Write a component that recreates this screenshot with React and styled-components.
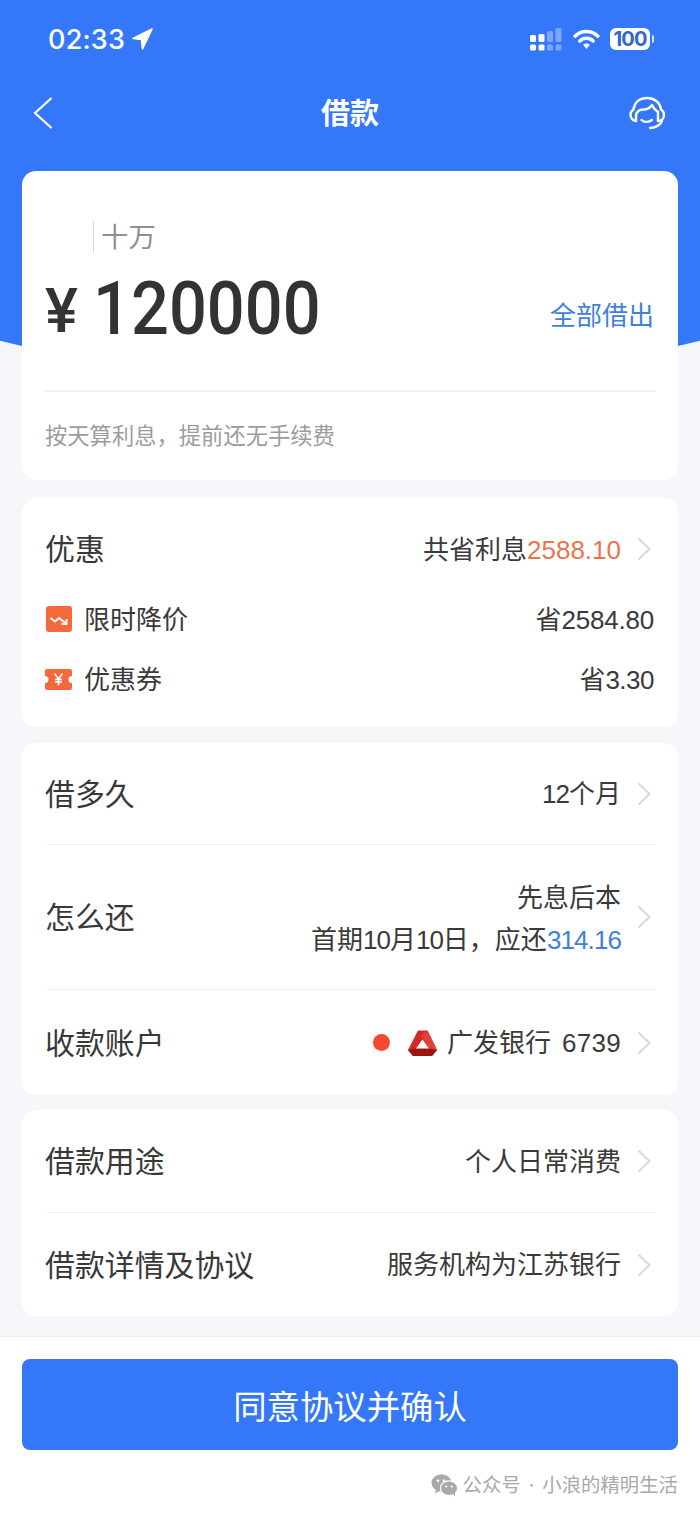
import React from "react";
import styled, { createGlobalStyle } from "styled-components";

const Global = createGlobalStyle`
  html, body { margin: 0; padding: 0; background: #f5f6fa; }
  body { font-family: "Noto Sans CJK SC", "Noto Sans", sans-serif; color: #333; }
  * { box-sizing: border-box; }
`;

const Page = styled.div`
  position: relative;
  width: 700px;
  height: 1514px;
  overflow: hidden;
  background: linear-gradient(#f3f3fb, #f6f7fa 300px);
  display: flex;
  flex-direction: column;
`;

const Backdrop = styled.div`
  position: absolute;
  left: -350px;
  right: -350px;
  top: -700px;
  height: 1081px;
  background: #3478f9;
  border-radius: 0 0 700px 700px / 0 0 300px 300px;
`;

const StatusBar = styled.div`
  position: relative;
  height: 78px;
  padding: 0 50px 0 48px;
  display: flex;
  align-items: center;
  justify-content: space-between;
  color: #fff;
`;

const Time = styled.div`
  display: flex;
  align-items: center;
  gap: 7px;
  font: 500 27px "Inter", sans-serif;
  letter-spacing: 0.2px;
`;

const StatusIcons = styled.div`
  display: flex;
  align-items: center;
  gap: 10px;
`;

const Signal = styled.svg`
  margin-right: 1px;
  flex: none;
`;

const Battery = styled.div`
  position: relative;
  width: 40px;
  height: 22px;
  border-radius: 6px;
  background: #fff;
  color: #2f68cf;
  font: 700 20px/22px "Inter", sans-serif;
  text-align: center;
  letter-spacing: -0.8px;
  &::after {
    content: "";
    position: absolute;
    right: -4px;
    top: 7px;
    width: 2px;
    height: 8px;
    border-radius: 0 2px 2px 0;
    background: rgba(255, 255, 255, 0.8);
  }
`;

const NavBar = styled.div`
  position: relative;
  height: 70px;
  padding: 0 35px 0 33px;
  display: flex;
  align-items: center;
  justify-content: space-between;
  margin-bottom: 23px;
`;

const NavTitle = styled.div`
  position: absolute;
  left: 0;
  right: 0;
  top: 0;
  text-align: center;
  color: #fff;
  font-size: 29px;
  font-weight: 700;
  line-height: 66px;
`;

const NavIcon = styled.svg`
  position: relative;
  flex: none;
`;

const Content = styled.div`
  position: relative;
  padding: 0 22px;
  display: flex;
  flex-direction: column;
`;

const Card = styled.section`
  background: #fff;
  border-radius: 14px;
  margin-bottom: ${(p) => p.$gap || 16}px;
  padding-bottom: ${(p) => p.$pb || 0}px;
`;

const AmountCard = styled(Card)`
  height: 309px;
  padding: 48px 22px 0 23px;
`;

const Unit = styled.div`
  height: 32px;
  margin-left: 48px;
  margin-top: 2px;
  padding-left: 7px;
  border-left: 1px solid #dcdcdc;
  color: #8f8f8f;
  font-size: 27.4px;
  line-height: 28px;
`;

const AmountRow = styled.div`
  height: 106px;
  margin-top: 2px;
  display: flex;
  align-items: center;
`;

const Yen = styled.span`
  font: 500 62px/1 "Roboto", sans-serif;
  color: #333;
  width: 48px;
  flex: none;
  margin-top: 6px;
`;

const Amount = styled.span`
  display: inline-block;
  font: 500 75px/1 "Roboto", sans-serif;
  color: #333;
  transform: scaleX(0.89);
  transform-origin: left center;
`;

const AllLink = styled.span`
  margin-left: auto;
  margin-right: 2px;
  color: #3f80dc;
  font-size: 26px;
  margin-top: 10px;
`;

const Rule = styled.div`
  height: 2px;
  background: #f1f1f3;
  margin-top: 29px;
`;

const Hint = styled.div`
  margin-top: 25px;
  color: #9c9c9c;
  font-size: 22.3px;
  line-height: 34px;
`;

const Row = styled.div`
  height: ${(p) => p.$h}px;
  padding-top: ${(p) => p.$pt || 0}px;
  margin: 0 22px 0 23px;
  display: flex;
  align-items: center;
  justify-content: space-between;
  border-bottom: ${(p) => (p.$line ? "1px solid #f3f3f5" : "0")};
`;

const Label = styled.div`
  font-size: 29.9px;
  color: #383838;
  white-space: nowrap;
  padding-bottom: 4px;
`;

const Value = styled.div`
  display: flex;
  align-items: center;
  font-size: 26px;
  color: #3a3a3a;
  white-space: nowrap;
  margin-right: 5px;
  padding-bottom: 4px;
`;

const Stack = styled.div`
  text-align: right;
  font-size: 26px;
  line-height: 42px;
  color: #3a3a3a;
  margin-top: 6px;
`;

const Num = styled.span`
  font-family: "Liberation Sans", sans-serif;
  font-size: 26px;
  letter-spacing: ${(p) => p.$ls || 0}px;
  margin-left: ${(p) => p.$ml || 0}px;
  color: ${(p) => p.$c || "inherit"};
`;

const ChevronBox = styled.svg`
  width: 14px;
  height: 26px;
  margin: 4px 0 0 16px;
  flex: none;
`;

const SubRow = styled.div`
  height: 60px;
  margin: 0 24px 0 23px;
  display: flex;
  align-items: center;
  justify-content: space-between;
  font-size: 26px;
  color: #3a3a3a;
`;

const SubLabel = styled.div`
  display: flex;
  align-items: center;
  gap: 11px;
`;

const SubText = styled.span`
  display: block;
  padding-bottom: 4px;
`;

const Dot = styled.span`
  width: 17px;
  height: 17px;
  border-radius: 50%;
  background: #f5492f;
  margin: 4px 18px 0 0;
`;

const BankLogo = styled.svg`
  margin: 4px 10px 0 0;
  flex: none;
`;

const Footer = styled.div`
  position: absolute;
  left: 0;
  right: 0;
  top: 1336px;
  bottom: 0;
  background: #fff;
  border-top: 1px solid #f0f0f2;
  padding: 22px 22px 0;
`;

const Confirm = styled.div`
  height: 91px;
  border-radius: 8px;
  background: #3478f9;
  color: #fff;
  font-size: 33.4px;
  display: flex;
  align-items: center;
  justify-content: center;
`;

const Watermark = styled.div`
  display: flex;
  justify-content: flex-end;
  align-items: center;
  gap: 5px;
  margin-top: 20px;
  color: #a9a9a9;
  font-family: "Inter", "Noto Sans CJK SC", sans-serif;
  font-size: 19.4px;
  line-height: 30px;
  word-spacing: 2.5px;
`;

const Chevron = () => (
  <ChevronBox viewBox="0 0 14 26">
    <path d="M1.5 2.5 L12.5 13 L1.5 23.5" fill="none" stroke="#d9d9db" strokeWidth="2" />
  </ChevronBox>
);

const Wechat = () => (
  <svg width="27" height="23" viewBox="0 0 27 23">
    <ellipse cx="10.5" cy="8.8" rx="10" ry="8.6" fill="#a9a9a9" />
    <path d="M5 15 L4 19.5 L9.5 16.5 Z" fill="#a9a9a9" />
    <ellipse cx="18" cy="14.2" rx="8.6" ry="7.4" fill="#a9a9a9" stroke="#fff" strokeWidth="1.2" />
    <path d="M22 19.5 L24 23 L24 18 Z" fill="#a9a9a9" />
    <circle cx="7" cy="6.8" r="1.4" fill="#fff" />
    <circle cx="13" cy="6.8" r="1.4" fill="#fff" />
    <circle cx="15.2" cy="12.6" r="1.1" fill="#fff" />
    <circle cx="20.8" cy="12.6" r="1.1" fill="#fff" />
  </svg>
);

export default function App() {
  return (
    <Page>
      <Global />
      <Backdrop />
      <StatusBar>
        <Time>
          02:33
          <svg width="21" height="22" viewBox="0 0 21 22">
            <path d="M20 1 L1 10.5 L9.5 11.5 L10.5 21 Z" fill="#fff" stroke="#fff" strokeWidth="1.6" strokeLinejoin="round" />
          </svg>
        </Time>
        <StatusIcons>
          <Signal width="32" height="23" viewBox="0 0 32 23">
            <rect x="0" y="7" width="6" height="7" rx="1.5" fill="#fff" />
            <rect x="8.5" y="6" width="6" height="8" rx="1.5" fill="#fff" />
            <rect x="0" y="16.5" width="6" height="6" rx="1.5" fill="#fff" />
            <rect x="8.5" y="16.5" width="6" height="6" rx="1.5" fill="#fff" />
            <rect x="17" y="3" width="6" height="11" rx="1.5" fill="#fff" opacity=".35" />
            <rect x="25.5" y="0" width="6" height="14" rx="1.5" fill="#fff" opacity=".35" />
            <rect x="17" y="16.5" width="6" height="6" rx="1.5" fill="#fff" opacity=".35" />
            <rect x="25.5" y="16.5" width="6" height="6" rx="1.5" fill="#fff" opacity=".35" />
          </Signal>
          <svg width="27" height="21" viewBox="0 0 28 22">
            <path d="M2 7.5 A17 17 0 0 1 26 7.5" fill="none" stroke="#fff" strokeWidth="3.6" strokeLinecap="round" />
            <path d="M7 12.5 A10 10 0 0 1 21 12.5" fill="none" stroke="#fff" strokeWidth="3.6" strokeLinecap="round" />
            <path d="M10.5 16.5 A5 5 0 0 1 17.5 16.5 L14 21 Z" fill="#fff" />
          </svg>
          <Battery>100</Battery>
        </StatusIcons>
      </StatusBar>
      <NavBar>
        <NavTitle>借款</NavTitle>
        <NavIcon width="20" height="32" viewBox="0 0 20 32">
          <path d="M18.5 1 L2 16 L18.5 31" fill="none" stroke="#fff" strokeWidth="2.2" />
        </NavIcon>
        <NavIcon width="36" height="34" viewBox="0 0 36 34">
          <g fill="none" stroke="#fff" strokeWidth="2.4" strokeLinecap="round" strokeLinejoin="round">
            <path d="M7 25 C3.5 25 1.5 22 1.5 18.5 C1.5 16 3 14.5 4.5 13.5 C5.5 6 11 2 18 2 C25 2 31 6 32 13.5 C33.5 14.5 35 16 35 18.5 C35 22 33 25 29 25 L29 16" />
            <path d="M7 25 L7 20 C7 16 10 13.5 14.5 13.5 C18 13.5 21 12 23 9 C24.5 12 26.5 14.5 29 16" />
            <path d="M12.5 24 C15 26.5 20 26.5 23 24" />
            <path d="M33 25 C31 29.5 27 31.5 21 32" />
          </g>
        </NavIcon>
      </NavBar>
      <Content>
        <AmountCard $gap={18}>
          <Unit>十万</Unit>
          <AmountRow>
            <Yen>¥</Yen>
            <Amount>120000</Amount>
            <AllLink>全部借出</AllLink>
          </AmountRow>
          <Rule />
          <Hint>按天算利息，提前还无手续费</Hint>
        </AmountCard>
        <Card $pb={18}>
          <Row $h={91} $pt={11}>
            <Label>优惠</Label>
            <Value>
              <span>
                共省利息<Num $c="#e87550">2588.10</Num>
              </span>
              <Chevron />
            </Value>
          </Row>
          <SubRow>
            <SubLabel>
              <svg width="27" height="26" viewBox="0 0 27 26" style={{ marginLeft: 1 }}>
                <rect width="26" height="26" rx="3" fill="#f2693c" />
                <path d="M4.5 12 L9 15.5 L13 12 L20 17.5" fill="none" stroke="#fff" strokeWidth="1.9" />
                <path d="M20.5 13 L20.5 18 L15.5 18" fill="none" stroke="#fff" strokeWidth="1.9" />
              </svg>
              <SubText>限时降价</SubText>
            </SubLabel>
            <SubText>
              省<Num $ls={-0.2}>2584.80</Num>
            </SubText>
          </SubRow>
          <SubRow>
            <SubLabel>
              <svg width="27" height="21" viewBox="0 0 27 21" style={{ marginRight: 1 }}>
                <path d="M2 0 H25 A2 2 0 0 1 27 2 V7 A3.5 3.5 0 0 0 27 14 V19 A2 2 0 0 1 25 21 H2 A2 2 0 0 1 0 19 V14 A3.5 3.5 0 0 0 0 7 V2 A2 2 0 0 1 2 0 Z" fill="#f2693c" />
                <path d="M9.5 4.5 L13.5 10 L17.5 4.5 M13.5 10 V16.5 M10 10.5 H17 M10 13 H17" fill="none" stroke="#fff" strokeWidth="1.6" />
              </svg>
              <SubText>优惠券</SubText>
            </SubLabel>
            <SubText>
              省<Num $ls={-0.5}>3.30</Num>
            </SubText>
          </SubRow>
        </Card>
        <Card $gap={15}>
          <Row $h={102} $line>
            <Label>借多久</Label>
            <Value>
              <span>
                <Num $ls={-1}>12</Num>个月
              </span>
              <Chevron />
            </Value>
          </Row>
          <Row $h={145} $line>
            <Label>怎么还</Label>
            <Value>
              <Stack>
                先息后本
                <br />
                首期<Num $ls={-1}>10</Num>月<Num $ls={-1}>10</Num>日，应还<Num $c="#3f80dc" $ls={-0.9}>314.16</Num>
              </Stack>
              <Chevron />
            </Value>
          </Row>
          <Row $h={105}>
            <Label>收款账户</Label>
            <Value>
              <Dot />
              <BankLogo width="29" height="26" viewBox="0 0 29 26">
                <path d="M10 0.5 H19.5 L29 20 L24 26 H5 L0 20 Z" fill="#d32a25" />
                <path d="M19.5 0.5 L29 20 H22 L13 5 Z" fill="#e2403a" />
                <path d="M0 20 L7.5 18.5 H21.5 L29 20 L24 26 H5 Z" fill="#9c1512" />
                <path d="M14.5 9.5 L21 18.5 H8 Z" fill="#fff" />
              </BankLogo>
              <span>
                广发银行<Num $ml={11} $ls={0.3}>6739</Num>
              </span>
              <Chevron />
            </Value>
          </Row>
        </Card>
        <Card>
          <Row $h={103} $line>
            <Label>借款用途</Label>
            <Value>
              个人日常消费
              <Chevron />
            </Value>
          </Row>
          <Row $h={103}>
            <Label>借款详情及协议</Label>
            <Value>
              服务机构为江苏银行
              <Chevron />
            </Value>
          </Row>
        </Card>
      </Content>
      <Footer>
        <Confirm>同意协议并确认</Confirm>
        <Watermark>
          <Wechat />
          公众号 · 小浪的精明生活
        </Watermark>
      </Footer>
    </Page>
  );
}
